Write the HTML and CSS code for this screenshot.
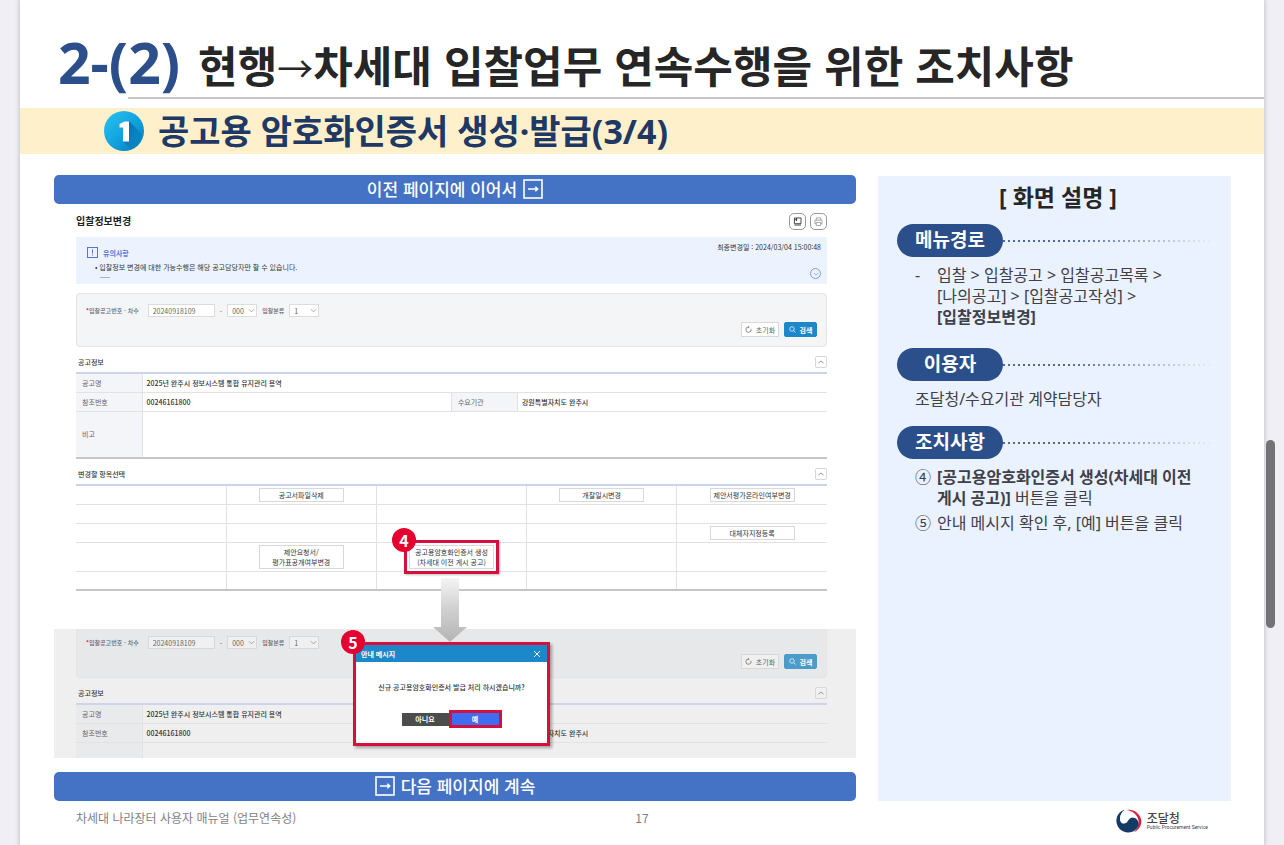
FILE: index.html
```html
<!DOCTYPE html>
<html lang="ko">
<head>
<meta charset="utf-8">
<meta name="viewport" content="width=device-width, initial-scale=1">
<title>차세대 나라장터 사용자 매뉴얼</title>
<link rel="stylesheet" href="styles.css">
</head>
<body>
<svg class="defs" aria-hidden="true">
  <symbol id="i-down" viewBox="0 0 8 8"><path d="M1 2.5 4 5.5 7 2.5" fill="none" stroke="currentColor"/></symbol>
  <symbol id="i-up" viewBox="0 0 8 8"><path d="M1.5 5 4 3 6.500 5" fill="none" stroke="currentColor"/></symbol>
  <symbol id="i-reset" viewBox="0 0 8 8"><path d="M6.800 3.200A3 3 0 1 1 4 1.200M3.200 0 4.800 1.200 3.500 2.600" fill="none" stroke="currentColor" stroke-width=".8"/></symbol>
  <symbol id="i-search" viewBox="0 0 8 8"><circle cx="3.400" cy="3.400" r="2.600" fill="none" stroke="currentColor" stroke-width=".8"/><path d="M5.300 5.300 7.500 7.500" stroke="currentColor" stroke-width=".8"/></symbol>
  <symbol id="i-boxarrow" viewBox="0 0 20 20"><rect x="1" y="1" width="18" height="18" fill="none" stroke="currentColor" stroke-width="1.600"/><path d="M5 10H14.500M12.300 7.800 14.700 10 12.300 12.200" fill="none" stroke="currentColor" stroke-width="1.500"/></symbol>
</svg>

<main class="slide">
  <header class="title">
    <h1><span class="title-no">2-(2)</span><span>현행<span class="title-arrow">→</span>차세대 입찰업무 연속수행을 위한 조치사항</span></h1>
    <div class="title-rule"></div>
  </header>

  <div class="band">
    <svg class="band-no" viewBox="0 0 40 40" role="img" aria-label="1">
      <defs>
        <linearGradient id="ball" x1="0" y1="0" x2="1" y2="1"><stop offset="0" stop-color="#2cc3ef"/><stop offset=".5" stop-color="#12a4e0"/><stop offset="1" stop-color="#0878b8"/></linearGradient>
        <linearGradient id="cast" x1="0" y1="0" x2="1" y2="1"><stop offset="0" stop-color="#075f95"/><stop offset="1" stop-color="#0a83c2" stop-opacity=".2"/></linearGradient>
      </defs>
      <circle cx="20" cy="20" r="20" fill="url(#ball)"/>
      <path d="M25 10 38 23A20 20 0 0 1 27 38.500L19 30.500Z" fill="url(#cast)"/>
      <path d="M25 10.500V30.500H19V16.500H15.500V13L20.500 10.500Z" fill="#fff"/>
    </svg>
    <h2>공고용 암호화인증서 생성·발급(3/4)</h2>
  </div>

  <div class="content">
    <div class="screens">
      <p class="banner">이전 페이지에 이어서 <svg><use href="#i-boxarrow"/></svg></p>

      <section class="screen">
        <div class="screen-head">
          <h3>입찰정보변경</h3>
          <button class="tool tool-dark" type="button" aria-label="매뉴얼"><svg viewBox="0 0 17 17" fill="none" stroke="currentColor"><path d="M5 4.500H12.500V11H5ZM5 12.500H12.500M7.500 4.500V8M5 6.500H8"/></svg></button>
          <button class="tool" type="button" aria-label="인쇄"><svg viewBox="0 0 17 17" fill="none" stroke="currentColor" stroke-width=".8"><path d="M6 7V4.500H11V7M6 11H4.500V7H12.500V11H11M6 9.500H11V13H6Z"/></svg></button>
        </div>

        <div class="notice">
          <div class="notice-text">
            <h4><svg viewBox="0 0 11 11" fill="none" stroke="currentColor"><rect x=".5" y=".5" width="10" height="10"/><path d="M5.500 2.500V6.500M5.500 7.500V8.500"/></svg>유의사항</h4>
            <p>• 입찰정보 변경에 대한 가능수행은 해당 공고담당자만 할 수 있습니다.</p>
            <div class="notice-dash"></div>
          </div>
          <div class="notice-side">
            <p>최종변경일 : 2024/03/04 15:00:48</p>
            <button class="round" type="button" aria-label="펼치기"><svg><use href="#i-down"/></svg></button>
          </div>
        </div>

        <form class="search">
          <div class="fields">
            <label class="lead" for="no1"><b>*</b>입찰공고번호 - 차수</label>
            <input id="no1" type="text" value="20240918109">
            <span>-</span>
            <span class="pick"><select aria-label="차수"><option>000</option></select><svg><use href="#i-down"/></svg></span>
            <label for="cls1">입찰분류</label>
            <span class="pick"><select id="cls1"><option>1</option></select><svg><use href="#i-down"/></svg></span>
          </div>
          <div class="actions">
            <button type="button"><svg><use href="#i-reset"/></svg>초기화</button>
            <button class="primary" type="button"><svg><use href="#i-search"/></svg>검색</button>
          </div>
        </form>

        <div class="section-head"><h4>공고정보</h4><button class="fold" type="button" aria-label="접기"><svg><use href="#i-up"/></svg></button></div>
        <table class="info">
          <colgroup><col class="c-th"><col class="c-td"><col class="c-th"><col></colgroup>
          <tr><th scope="row">공고명</th><td colspan="3">2025년 완주시 정보시스템 통합 유지관리 용역</td></tr>
          <tr><th scope="row">참조번호</th><td>00246161800</td><th scope="row">수요기관</th><td>강원특별자치도 완주시</td></tr>
          <tr class="tall"><th scope="row">비고</th><td colspan="3"></td></tr>
        </table>

        <div class="section-head"><h4>변경할 항목선택</h4><button class="fold" type="button" aria-label="접기"><svg><use href="#i-up"/></svg></button></div>
        <table class="matrix">
          <tr><td></td><td><button type="button">공고서파일삭제</button></td><td></td><td><button type="button">개찰일시변경</button></td><td><button type="button">제안서평가온라인여부변경</button></td></tr>
          <tr><td></td><td></td><td></td><td></td><td></td></tr>
          <tr><td></td><td></td><td></td><td></td><td><button type="button">대체자지정등록</button></td></tr>
          <tr class="tall"><td></td><td><button type="button">제안요청서/<br>평가표공개여부변경</button></td><td><div class="marked"><button type="button">공고용암호화인증서 생성<br>(차세대 이전 게시 공고)</button><span class="badge">4</span></div></td><td></td><td></td></tr>
          <tr><td></td><td></td><td></td><td></td><td></td></tr>
        </table>
      </section>

      <section class="screen screen-dim">
        <svg class="flow" viewBox="0 0 34 64" aria-hidden="true">
          <defs><linearGradient id="fade" x1="0" y1="0" x2="0" y2="1"><stop offset="0" stop-color="#f4f4f4"/><stop offset=".5" stop-color="#cfcfcf"/><stop offset="1" stop-color="#b4b4b4"/></linearGradient></defs>
          <path d="M8 0H26V49H34L17 64 0 49H8Z" fill="url(#fade)"/>
        </svg>
        <form class="search search-cut">
          <div class="fields">
            <label class="lead" for="no2"><b>*</b>입찰공고번호 - 차수</label>
            <input id="no2" type="text" value="20240918109">
            <span>-</span>
            <span class="pick"><select aria-label="차수"><option>000</option></select><svg><use href="#i-down"/></svg></span>
            <label for="cls2">입찰분류</label>
            <span class="pick"><select id="cls2"><option>1</option></select><svg><use href="#i-down"/></svg></span>
          </div>
          <div class="actions">
            <button type="button"><svg><use href="#i-reset"/></svg>초기화</button>
            <button class="primary" type="button"><svg><use href="#i-search"/></svg>검색</button>
          </div>
        </form>
        <div class="section-head"><h4>공고정보</h4><button class="fold" type="button" aria-label="접기"><svg><use href="#i-up"/></svg></button></div>
        <table class="info info-cut">
          <colgroup><col class="c-th"><col class="c-td"><col class="c-th"><col></colgroup>
          <tr><th scope="row">공고명</th><td colspan="3">2025년 완주시 정보시스템 통합 유지관리 용역</td></tr>
          <tr><th scope="row">참조번호</th><td>00246161800</td><th scope="row">수요기관</th><td>강원특별자치도 완주시</td></tr>
          <tr><th></th><td colspan="3"></td></tr>
        </table>

        <div class="overlay">
          <div class="dialog" role="dialog" aria-label="안내 메시지">
            <div class="dialog-head"><h4>안내 메시지</h4><button type="button" aria-label="닫기"><svg viewBox="0 0 8 8"><path d="M1 1 7 7M7 1 1 7" stroke="currentColor" stroke-width=".9"/></svg></button></div>
            <p>신규 공고용암호화인증서 발급 처리 하시겠습니까?</p>
            <div class="dialog-actions"><button type="button">아니요</button><button class="yes" type="button">예</button></div>
            <span class="badge">5</span>
          </div>
        </div>
      </section>

      <p class="banner"><svg><use href="#i-boxarrow"/></svg> 다음 페이지에 계속</p>
    </div>

    <aside class="guide">
      <h3 class="guide-title">[ 화면 설명 ]</h3>
      <section>
        <h4><span>메뉴경로</span><i></i></h4>
        <ul><li><span class="mark">-</span><p>입찰 &gt; 입찰공고 &gt; 입찰공고목록 &gt;<br>[나의공고] &gt; [입찰공고작성] &gt;<br><strong>[입찰정보변경]</strong></p></li></ul>
      </section>
      <section>
        <h4><span>이용자</span><i></i></h4>
        <p class="plain">조달청/수요기관 계약담당자</p>
      </section>
      <section>
        <h4><span>조치사항</span><i></i></h4>
        <ul>
          <li><span class="mark">④</span><p><strong>[공고용암호화인증서 생성(차세대 이전<br>게시 공고)]</strong> 버튼을 클릭</p></li>
          <li><span class="mark">⑤</span><p>안내 메시지 확인 후, [예] 버튼을 클릭</p></li>
        </ul>
      </section>
    </aside>
  </div>

  <footer class="foot">
    <p>차세대 나라장터 사용자 매뉴얼 (업무연속성)</p>
    <p class="page-no">17</p>
    <div class="agency">
      <svg viewBox="0 0 26 24" aria-hidden="true">
        <path d="M8 1.500C16-1.500 25 4 25.300 12c.2 5-3 9.500-7.300 11 3.500-3 5.500-8 3.500-12.500C19.500 6 14 2.500 8 1.500Z" fill="#d9203f"/>
        <path d="M9 .8C4 2 .3 6.500.4 12 .5 18.500 6 23.600 12.300 23.500 18 23.400 22.500 19.500 22.600 14 22.600 10.500 19.500 8 16 8.600 12 9.400 12.500 14 8.500 14.600 5.500 15 3.800 12.500 4 9.500 4.200 5.500 6 3 9 .8Z" fill="#153a66"/>
        <path d="M9 .8C5 3.500 3.500 8 4.600 11.500 5.800 14.600 9 14.800 10.500 12.500 12 9.500 14 7.600 17 8.300 20.500 9 22.300 11.500 22.600 14.500 23.500 7.500 17.500 1.500 9 .8Z" fill="#fff"/>
      </svg>
      <div><strong>조달청</strong><small>Public Procurement Service</small></div>
    </div>
  </footer>
</main>
<div class="thumb" aria-hidden="true"></div>
</body>
</html>
```
FILE: styles.css
```css
* { box-sizing: border-box; margin: 0; padding: 0; }

body {
  background: #efeff5;
  color: #262626;
  font-family: "Noto Sans CJK KR", "Noto Sans", sans-serif;
  overflow-x: hidden;
}

button, input, select { font: inherit; color: inherit; }
h1, h2, h3, h4 { font-weight: 700; }
ul { list-style: none; }
table { border-collapse: collapse; width: 100%; table-layout: fixed; }
.defs { position: absolute; width: 0; height: 0; }

.slide {
  margin: 0 20px;
  min-height: 100vh;
  background: #fff;
  box-shadow: 0 0 4px 1px #c4c4ca;
}

/* Title */
.title h1 {
  display: flex;
  align-items: center;
  gap: 18px;
  height: 97px;
  padding: 34px 38px 0;
  font-size: 43px;
  line-height: 60px;
  white-space: nowrap;
}
.title-no {
  padding-bottom: 8px;
  color: #2c4f8c;
  font-family: "Noto Sans", sans-serif;
  font-size: 57px;
}
.title-arrow { font-size: 36px; font-weight: 400; }
.title-rule { height: 2px; margin-left: 108px; background: #c6c6c6; }

.band {
  display: flex;
  align-items: center;
  gap: 14px;
  height: 46px;
  margin-top: 9px;
  padding-left: 84px;
  background: #fff0cc;
}
.band h2 { color: #203864; font-family: "Noto Sans", "Noto Sans CJK KR", sans-serif; font-size: 34px; line-height: 46px; }
.band-no { width: 40px; height: 40px; }

.content {
  display: grid;
  grid-template-columns: 802fr 353fr;
  gap: 22px;
  padding: 21px 33px 0 34px;
}

.banner {
  display: flex;
  align-items: center;
  justify-content: center;
  gap: 6px;
  height: 29px;
  padding-bottom: 2px;
  border-radius: 5px;
  background: #4472c4;
  color: #fff;
  font-size: 17px;
  font-weight: 500;
  line-height: 26px;
}
.banner svg { width: 20px; height: 20px; }

/* Application screens */
.screen {
  padding: 0 29px 0 22px;
  color: #333;
  font-size: 7px;
  line-height: 10px;
}
.screen button {
  display: inline-flex;
  align-items: center;
  justify-content: center;
  border: 1px solid #d8d8d8;
  background: #fff;
}
.screen-head {
  display: flex;
  align-items: center;
  gap: 4px;
  height: 33px;
  padding-top: 1px;
}
.screen-head h3 { flex: 1; font-size: 10px; line-height: 16px; color: #222; }
.screen .tool { width: 17px; height: 17px; border-color: #999; border-radius: 5px; color: #888; }
.screen .tool-dark { color: #333; }
.tool svg { width: 15px; height: 15px; flex: none; }

.notice {
  display: flex;
  justify-content: space-between;
  height: 47px;
  padding: 5px 6px 5px 11px;
  background: #ecf3ff;
}
.notice h4 { display: flex; align-items: center; gap: 5px; padding-top: 5px; color: #5573d8; font-size: 7px; }
.notice h4 svg { width: 11px; height: 11px; }
.notice-text p { padding: 4px 0 0 8px; }
.notice-dash { width: 10px; height: 1px; margin: 5px 0 0 13px; background: #a9b3c8; }
.notice-side { display: flex; flex-direction: column; align-items: flex-end; justify-content: space-between; }
.screen .round { width: 11px; height: 11px; border-color: #7f9be0; border-radius: 50%; background: none; color: #7f9be0; }
.round svg { width: 6px; height: 6px; flex: none; }

.search {
  height: 54px;
  margin-top: 9px;
  padding: 10px 9px 8px;
  border: 1px solid #e2e4e6;
  border-radius: 4px;
  background: #f4f5f7;
  color: #666;
}
.fields { display: flex; align-items: center; gap: 5px; height: 13px; }
.fields b { color: #e22; }
.fields label { font-size: 6px; font-weight: 500; }
.fields .lead { padding-right: 4px; }
.fields input, .fields select {
  height: 13px;
  border: 1px solid #dcdcdc;
  background: #fff;
  line-height: 10px;
  appearance: none;
}
.fields input { width: 67px; padding: 0 4px; }
.fields select { width: 30px; padding: 0 4px; }
.pick { position: relative; display: flex; }
.pick svg { position: absolute; right: 2px; top: 3px; width: 7px; height: 7px; color: #999; }
.actions { display: flex; justify-content: flex-end; gap: 5px; margin-top: 5px; }
.actions button { gap: 4px; width: 38px; height: 15px; }
.actions svg { width: 7px; height: 7px; flex: none; }
.screen .actions .primary { width: 33px; border-color: #1c87c9; border-radius: 2px; background: #1c87c9; color: #fff; font-weight: 700; }

.section-head {
  display: flex;
  align-items: center;
  justify-content: space-between;
  height: 20px;
  margin-top: 5px;
  padding-left: 2px;
}
.section-head h4 { font-size: 7px; font-weight: 500; }
.screen .fold { width: 12px; height: 12px; border-radius: 2px; color: #999; }
.fold svg { width: 8px; height: 8px; flex: none; }

.info, .matrix { border-top: 2px solid #ccd3ec; border-bottom: 2px solid #c6c6c6; }
.info tr, .matrix tr { height: 19px; }
.info tr + tr, .matrix tr + tr { border-top: 1px solid #e2e2e2; }
.info .tall { height: 47px; }
.c-th { width: 66px; }
.c-td { width: 41.200%; }
.info th { padding-left: 6px; border-right: 1px solid #e2e2e2; background: #f4f5f8; color: #666; font-weight: 400; text-align: left; }
.info td + th { border-left: 1px solid #e2e2e2; }
.info td { padding-left: 4px; font-weight: 500; }

.matrix .tall { height: 29px; }
.matrix td { text-align: center; vertical-align: middle; line-height: 0; }
.matrix td + td { border-left: 1px solid #e2e2e2; }
.matrix button { width: 85px; min-height: 14px; line-height: 10px; white-space: nowrap; }
.matrix .tall button { min-height: 24px; }
.marked { position: relative; display: inline-block; }
.marked::after {
  content: "";
  position: absolute;
  inset: -5px;
  border: 3px solid #d60f3c;
  box-shadow: 1px 1px 2px #0004;
}
.badge {
  position: absolute;
  z-index: 2;
  left: -17px;
  top: -17px;
  width: 24px;
  height: 24px;
  border-radius: 50%;
  background: #e4002f;
  color: #fff;
  font-size: 16px;
  font-weight: 700;
  line-height: 24px;
  text-align: center;
}

.screen-dim { position: relative; margin: 38px 0 14px; background: #efefef; }
.search-cut {
  height: 49px;
  margin-top: 0;
  padding-top: 7px;
  border-top: 0;
  border-radius: 0 0 4px 4px;
  background: #e7e8ea;
}
.screen-dim .fields input, .screen-dim .fields select, .screen-dim .actions button, .screen-dim .fold { background: #f0f0f0; border-color: #d8d8d8; }
.screen-dim .actions .primary { background: #4b9ccb; border-color: #4b9ccb; }
.info-cut { border-bottom: 0; }
.info-cut th { background: #e9eaec; }
.info-cut tr:last-child { height: 16px; }

/* Arrow and dialog lie over the dimmed screen */
.flow {
  position: absolute;
  z-index: 1;
  left: 379px;
  bottom: 116px;
  width: 34px;
  height: 64px;
}
.overlay {
  position: absolute;
  inset: 13px 29px auto 22px;
  display: flex;
  justify-content: center;
}
.dialog {
  position: relative;
  width: 197px;
  border: 3px solid #d60f3c;
  background: #fff;
  box-shadow: 2px 2px 3px #0005;
  text-align: center;
}
.dialog .badge { left: -15px; top: -15px; }
.dialog-head {
  display: flex;
  align-items: center;
  justify-content: space-between;
  height: 17px;
  padding: 0 5px;
  background: #1c87c9;
  color: #fff;
}
.dialog-head h4 { font-size: 7px; }
.screen .dialog-head button { width: 10px; height: 10px; border: 0; background: none; }
.dialog-head svg { width: 8px; height: 8px; flex: none; }
.dialog p { padding: 20px 0 18px; font-weight: 500; }
.dialog-actions { display: flex; align-items: center; justify-content: center; padding-bottom: 15px; }
.screen .dialog-actions button { width: 47px; height: 13px; border: 0; background: #4c4c4c; color: #fff; font-weight: 700; }
.screen .dialog-actions .yes { width: 53px; height: 18px; border: 3px solid #d60f3c; background: #3f6df0; }

/* Explanation column */
.guide {
  margin-top: 1px;
  padding: 3px 16px 0 19px;
  background: #eaf2ff;
  color: #404048;
  font-family: "Noto Sans", "Noto Sans CJK KR", sans-serif;
  font-size: 16px;
  line-height: 21px;
}
.guide-title { margin-bottom: 9px; padding-left: 4px; color: #262626; font-size: 23px; font-weight: 700; line-height: 36px; text-align: center; }
.guide section { margin-bottom: 16px; }
.guide h4 { display: flex; align-items: center; margin-bottom: 8px; }
.guide h4 span {
  width: 106px;
  border-radius: 17px;
  background: #2b4f8a;
  color: #fff;
  font-size: 19px;
  line-height: 33px;
  text-align: center;
}
.guide h4 i {
  flex: 1;
  height: 2px;
  background: radial-gradient(circle at 1px 1px, #4c6a9c 1px, transparent 1px) 0 0 / 5px 2px;
  mask-image: linear-gradient(90deg, #000 30%, transparent);
}
.guide li { display: flex; padding: 0 0 4px 18px; white-space: nowrap; }
.mark { width: 22px; flex: none; }
.guide strong { font-weight: 700; }
.plain { padding-left: 18px; }

.foot {
  display: grid;
  grid-template-columns: 1fr auto 1fr;
  align-items: center;
  padding: 4px 56px 0;
  color: #7f7f7f;
  font-size: 12px;
  line-height: 18px;
}
.foot p { padding-bottom: 2px; }
.agency { display: flex; align-items: center; justify-self: end; gap: 5px; padding-top: 4px; }
.agency > svg { width: 26px; height: 24px; }
.agency div { display: flex; flex-direction: column; color: #444; }
.agency strong { font-size: 12px; font-weight: 500; line-height: 12px; }
.agency small { font-family: Roboto, sans-serif; font-size: 5px; line-height: 7px; }

.thumb {
  position: fixed;
  right: 9px;
  top: 440px;
  width: 9px;
  height: 188px;
  border-radius: 5px;
  background: #737375;
}
```
